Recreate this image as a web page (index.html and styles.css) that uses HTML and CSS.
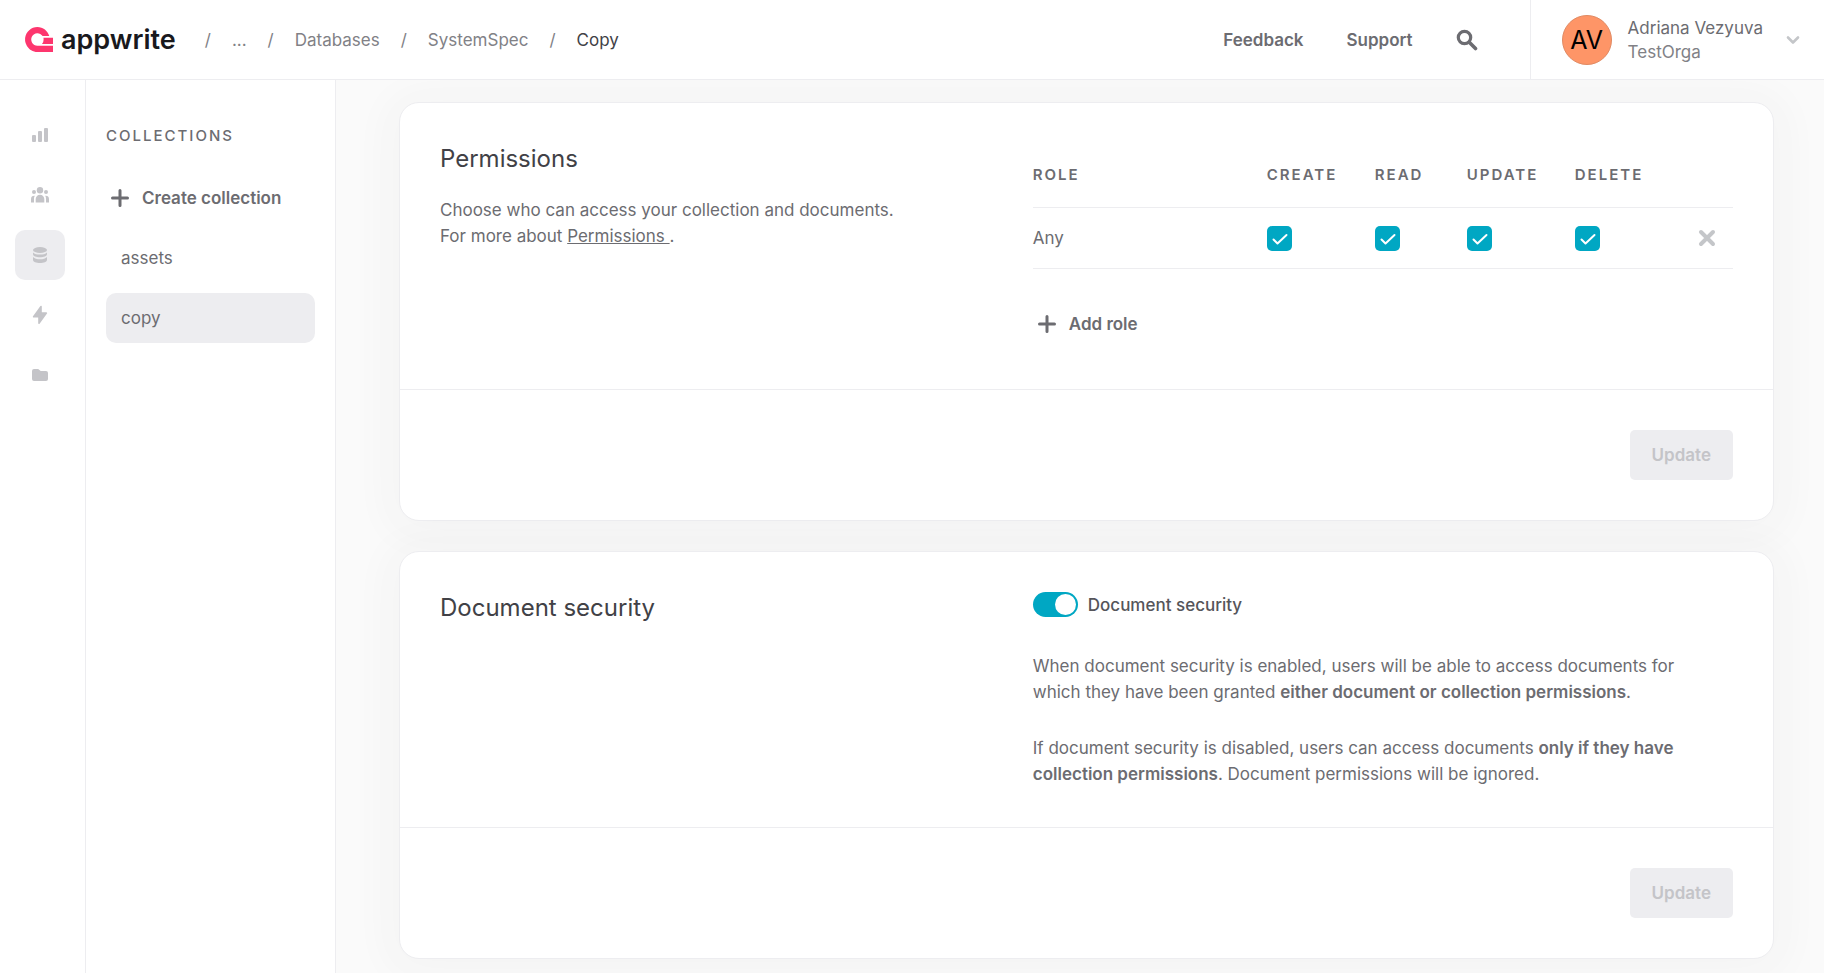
FILE: index.html
```html
<!DOCTYPE html>
<html lang="en">
<head>
<meta charset="utf-8">
<title>Copy - Appwrite</title>
<link rel="stylesheet" href="styles.css">
</head>
<body class="shell">
<header class="header">
  <a class="logo" href="#" aria-label="Appwrite">
    <svg class="logo-mark" viewBox="0 0 28 25" aria-hidden="true"><path fill="#fd366e" d="M28 18.7V25H12.400C7.900 25 4 22.500 1.800 18.700A12.300 12.300 0 0 1 .1 14V11C1 4.700 6.200 0 12.400 0C18 0 22.800 3.900 24.300 9.100H17.600A6.200 6.200 0 1 0 12.400 18.700ZM28 10.800V16.900H17A6.200 6.200 0 0 0 18.600 12.500A6 6 0 0 0 18.400 10.800Z"/></svg>
    <span>appwrite</span>
  </a>
  <nav class="crumbs" aria-label="Breadcrumb">
    <span>/</span><a href="#">...</a><span>/</span><a href="#">Databases</a><span>/</span><a href="#">SystemSpec</a><span>/</span><a class="current" href="#" aria-current="page">Copy</a>
  </nav>
  <div class="actions">
    <button class="text-button" type="button">Feedback</button>
    <button class="text-button" type="button">Support</button>
    <button class="icon-button" type="button" aria-label="Search"><svg width="22" height="22" viewBox="0 0 22 22" fill="none" stroke="currentColor" stroke-linecap="round"><circle cx="8.500" cy="8.500" r="6.200" stroke-width="3.200"/><path d="M13.500 13.500L19.500 19.500" stroke-width="3.600"/></svg></button>
  </div>
  <button class="account" type="button">
    <span class="avatar">AV</span>
    <span class="account-text"><span>Adriana Vezyuva</span><span class="org">TestOrga</span></span>
    <svg class="chevron" width="14" height="10" viewBox="0 0 14 10" fill="none" stroke="#c4c6c9" stroke-width="2.600" stroke-linecap="round" stroke-linejoin="round"><path d="M2 2.500L7 7.500L12 2.500"/></svg>
  </button>
</header>
<div class="body">
  <nav class="rail" aria-label="Project">
    <a class="rail-item" href="#" aria-label="Overview"><svg viewBox="0 0 20 20"><rect x="2" y="10" width="4" height="7" rx="1"/><rect x="8" y="6" width="4" height="11" rx="1"/><rect x="14" y="3" width="4" height="14" rx="1"/></svg></a>
    <a class="rail-item" href="#" aria-label="Auth"><svg viewBox="0 0 20 20"><circle cx="10" cy="5.200" r="3.200"/><circle cx="4" cy="7" r="2"/><circle cx="16" cy="7" r="2"/><path d="M5.700 17.500V14a4.300 4.300 0 0 1 8.600 0v3.500ZM1 17.500V14a3.500 3.500 0 0 1 3.800-3.300A6 6 0 0 0 4 14v3.500ZM19 17.500V14a3.500 3.500 0 0 0-3.800-3.300A6 6 0 0 1 16 14v3.500Z"/></svg></a>
    <a class="rail-item active" href="#" aria-label="Databases"><svg viewBox="0 0 20 20"><ellipse cx="10" cy="5" rx="7" ry="3"/><path d="M3 7.400C4.500 9 7 9.600 10 9.600S15.500 9 17 7.400V9.200C17 11 13.800 12.300 10 12.300S3 11 3 9.200ZM3 12C4.500 13.600 7 14.300 10 14.300S15.500 13.600 17 12V15C17 16.700 13.800 18 10 18S3 16.700 3 15Z"/></svg></a>
    <a class="rail-item" href="#" aria-label="Functions"><svg viewBox="0 0 20 20"><path d="M11.800 1.400V7.300H16.300A.8.800 0 0 1 17 8.600L9.600 18.700A.8.800 0 0 1 8.200 18.300V12.600H3.700A.8.800 0 0 1 3 11.300L10.400 1A.8.800 0 0 1 11.800 1.400Z"/></svg></a>
    <a class="rail-item" href="#" aria-label="Storage"><svg viewBox="0 0 20 20"><path d="M2 6a2 2 0 0 1 2-2H8.200L10.700 6H16a2 2 0 0 1 2 2V14a2 2 0 0 1-2 2H4a2 2 0 0 1-2-2Z"/></svg></a>
  </nav>
  <aside class="collections">
    <h2 class="eyebrow">Collections</h2>
    <button class="add-button" type="button"><svg class="plus" viewBox="0 0 18 18"><path d="M9 1.500V16.500M1.500 9H16.500"/></svg>Create collection</button>
    <a class="collection" href="#">assets</a>
    <a class="collection selected" href="#">copy</a>
  </aside>
  <main class="main">
    <form class="card">
      <div class="card-body">
        <div>
          <h1 class="card-title">Permissions</h1>
          <p class="intro">Choose who can access your collection and documents.<br>For more about <a href="#">Permissions </a>.</p>
        </div>
        <div>
          <table class="roles">
            <thead><tr><th class="col-role">Role</th><th class="col-wide">Create</th><th class="col-narrow">Read</th><th class="col-wide">Update</th><th class="col-wide">Delete</th><th></th></tr></thead>
            <tbody><tr>
              <td>Any</td>
              <td><input class="check" type="checkbox" checked aria-label="Create"></td>
              <td><input class="check" type="checkbox" checked aria-label="Read"></td>
              <td><input class="check" type="checkbox" checked aria-label="Update"></td>
              <td><input class="check" type="checkbox" checked aria-label="Delete"></td>
              <td class="remove-cell"><button class="remove" type="button" aria-label="Remove role"><svg width="18" height="18" viewBox="0 0 18 18" fill="none" stroke="#c4c6c9" stroke-width="4" stroke-linecap="round"><path d="M3 3L15 15M15 3L3 15"/></svg></button></td>
            </tr></tbody>
          </table>
          <button class="add-button" type="button"><svg class="plus" viewBox="0 0 18 18"><path d="M9 1.500V16.500M1.500 9H16.500"/></svg>Add role</button>
        </div>
      </div>
      <div class="card-footer"><button class="update" type="submit" disabled>Update</button></div>
    </form>
    <form class="card">
      <div class="card-body">
        <h1 class="card-title">Document security</h1>
        <div>
          <label class="switch-row"><input class="switch" type="checkbox" role="switch" checked>Document security</label>
          <div class="notes">
            <p>When document security is enabled, users will be able to access documents for which they have been granted <b>either document or collection permissions</b>.</p>
            <p>If document security is disabled, users can access documents <b>only if they have collection permissions</b>. Document permissions will be ignored.</p>
          </div>
        </div>
      </div>
      <div class="card-footer"><button class="update" type="submit" disabled>Update</button></div>
    </form>
  </main>
</div>
</body>
</html>
```
FILE: styles.css
```css
* { box-sizing: border-box; }
body, h1, h2, p { margin: 0; }
a { color: inherit; text-decoration: none; }
button { font: inherit; color: inherit; background: none; border: 0; padding: 0; cursor: pointer; }
svg { display: block; flex: none; }

.shell {
  display: flex;
  flex-direction: column;
  height: 100vh;
  overflow: hidden;
  background: #fafafa;
  color: #6c6c71;
  font: 400 17px/26px Inter, "Liberation Sans", sans-serif;
}

.header {
  display: flex;
  align-items: center;
  flex: none;
  height: 80px;
  background: #fff;
  border-bottom: 1px solid #ededf0;
}
.logo {
  display: flex;
  align-items: center;
  gap: 8px;
  padding-left: 25px;
  color: #19191d;
  font-size: 27px;
  font-weight: 600;
}
.logo-mark { width: 28px; height: 25px; }
.crumbs {
  display: flex;
  gap: 21px;
  margin-left: 29px;
  color: #818186;
}
.crumbs .current { color: #414146; }
.actions {
  display: flex;
  align-items: center;
  gap: 43px;
  margin-left: auto;
  padding-right: 52px;
}
.text-button { font-weight: 600; }
.account {
  display: flex;
  align-items: center;
  align-self: stretch;
  gap: 16px;
  padding: 0 24px 0 31px;
  border-left: 1px solid #ededf0;
  text-align: left;
}
.avatar {
  display: grid;
  place-items: center;
  width: 50px;
  height: 50px;
  border: 1px solid #e08a63;
  border-radius: 50%;
  background: #fe9567;
  color: #000;
  font-size: 25px;
}
.account-text { display: grid; line-height: 24px; }
.org { color: #818186; }
.chevron { margin-left: 7px; }

.body { display: flex; flex: 1; min-height: 0; }
.rail {
  display: flex;
  flex-direction: column;
  gap: 10px;
  flex: none;
  padding: 30px 20px 0 15px;
  background: #fff;
  border-right: 1px solid #ededf0;
}
.rail-item {
  display: grid;
  place-items: center;
  width: 50px;
  height: 50px;
  border-radius: 10px;
}
.rail-item.active { background: #ededf0; }
.rail-item svg { width: 20px; height: 20px; fill: #c4c4c8; }

.collections {
  display: flex;
  flex-direction: column;
  flex: none;
  width: 250px;
  padding: 43px 20px 0;
  background: #fff;
  border-right: 1px solid #ededf0;
}
.eyebrow, .roles th {
  font-size: 15px;
  font-weight: 500;
  letter-spacing: 2px;
  text-transform: uppercase;
}
.eyebrow { margin-bottom: 24px; }
.add-button {
  display: flex;
  align-items: center;
  gap: 13px;
  height: 50px;
  padding-left: 5px;
  font-weight: 600;
}
.plus { width: 18px; height: 18px; fill: none; stroke: currentColor; stroke-width: 3; stroke-linecap: round; }
.collection {
  height: 50px;
  margin-top: 10px;
  padding: 12px 15px;
  border-radius: 10px;
}
.collection.selected { background: #ededf0; }

.main {
  display: flex;
  flex-direction: column;
  gap: 30px;
  flex: 1;
  min-width: 0;
  padding: 22px 50px 0 63px;
  overflow: hidden;
}
.card {
  flex: none;
  background: #fff;
  border: 1px solid #ededf0;
  border-radius: 20px;
  box-shadow: 0 4px 40px 12px rgba(55, 59, 77, .03);
}
.card-body {
  display: grid;
  grid-template-columns: 15fr 19fr;
  gap: 40px;
  padding: 40px;
}
.card-title { color: #414146; font-size: 24px; font-weight: 400; line-height: 32px; }
.intro { margin-top: 22px; }
.intro a { text-decoration: underline; }
.card-footer {
  display: flex;
  justify-content: flex-end;
  padding: 40px;
  border-top: 1px solid #ededf0;
}
.update {
  height: 50px;
  padding: 0 22px;
  border-radius: 5px;
  background: #ededf0;
  color: #c4c4c8;
  font-weight: 600;
}

.roles { width: 100%; margin-bottom: 30px; border-collapse: separate; border-spacing: 0; table-layout: fixed; }
.roles th, .roles td { padding: 0; border-bottom: 1px solid #ededf0; text-align: left; }
.roles th { height: 65px; font-weight: 600; }
.roles td { height: 61px; }
.col-role { width: 234px; }
.col-wide { width: 108px; }
.col-narrow { width: 92px; }
.check {
  appearance: none;
  display: block;
  width: 25px;
  height: 25px;
  margin: 0;
  border-radius: 5px;
  border: 1px solid #c4c4c8;
}
.check:checked {
  border: 0;
  background: #00a7c3 url("data:image/svg+xml,%3Csvg xmlns='http://www.w3.org/2000/svg' viewBox='0 0 25 25' fill='none' stroke='white' stroke-width='2' stroke-linecap='round' stroke-linejoin='round'%3E%3Cpath d='M6.500 13.500L10.500 17.500L19.500 9'/%3E%3C/svg%3E");
}
.roles .remove-cell { padding-right: 17px; }
.remove { display: block; margin-left: auto; }

.switch-row {
  display: flex;
  align-items: center;
  gap: 10px;
  height: 25px;
  color: #55555a;
  font-weight: 500;
}
.switch {
  appearance: none;
  width: 45px;
  height: 25px;
  margin: 0;
  padding: 2px;
  border-radius: 13px;
  background: #c4c4c8;
}
.switch::before { content: ""; display: block; width: 21px; height: 21px; border-radius: 50%; background: #fff; }
.switch:checked { background: #00a7c3; }
.switch:checked::before { margin-left: auto; }
.notes { display: grid; gap: 30px; max-width: 680px; margin-top: 36px; }
.notes b { font-weight: 600; }
```
